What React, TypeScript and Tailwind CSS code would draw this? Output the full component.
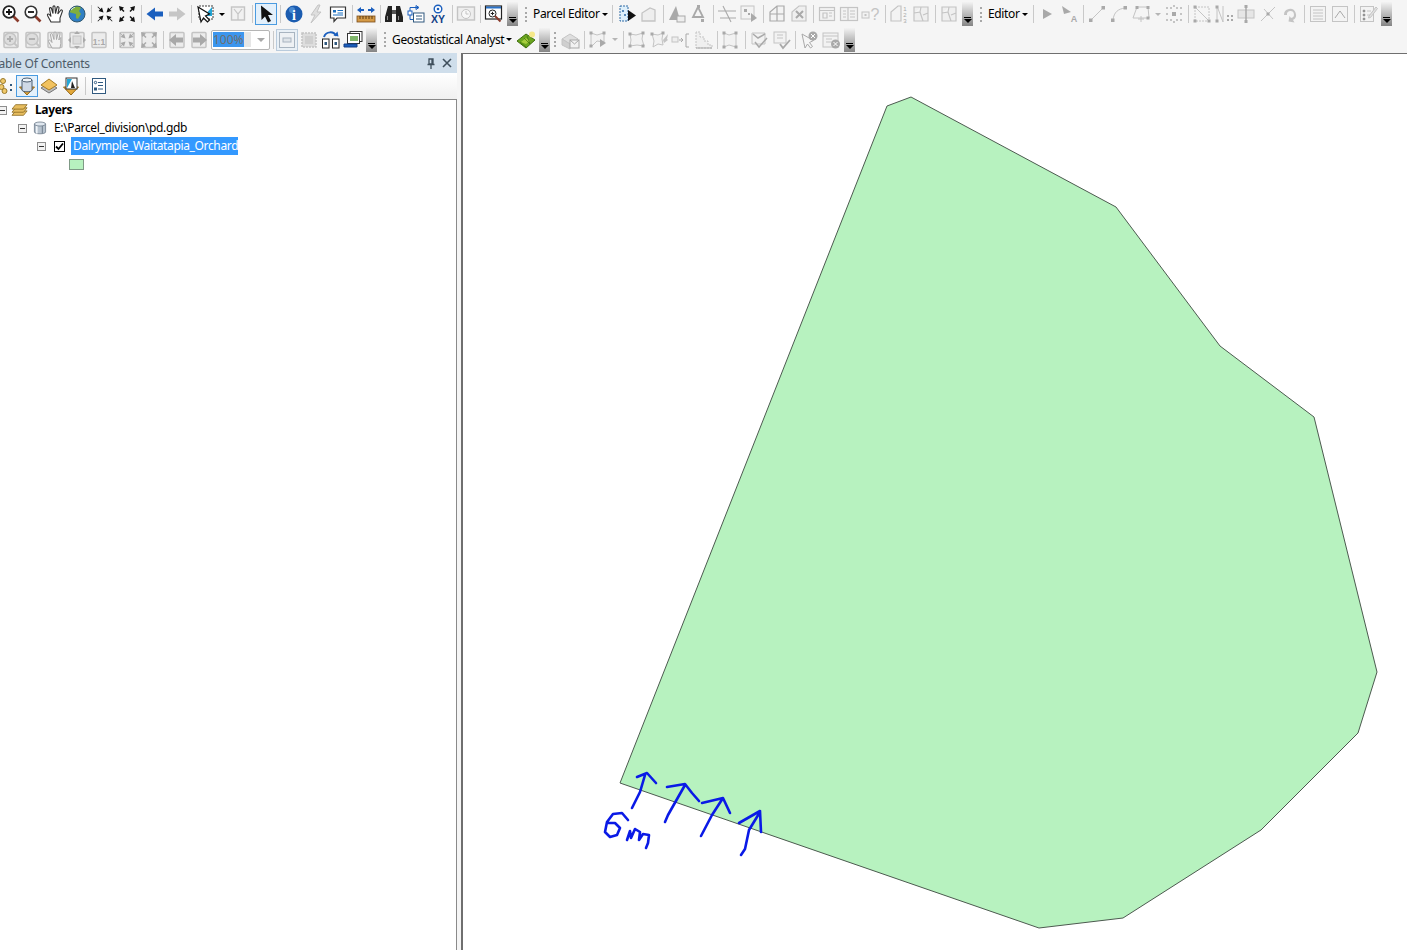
import type { ReactNode } from "react"

const G = "#c4c4c4"
const D = "#a9a9a9"

const page = <rect x="3" y="2.5" width="14" height="15" rx="1" fill="#ececec" stroke={G} strokeWidth="1.5" />
const parcel = <path d="M3 3h14v14H3z M3 9l6-1 1-5 M9 8l3 9 M12 11l5-2" fill="#efefef" stroke={G} strokeWidth="1.2" />
const win = <g fill="#f2f2f2" stroke={G} strokeWidth="1.2"><rect x="2.5" y="3.5" width="15" height="13" /><path d="M2.5 6.5h15 M6 9h4v5H6z M12 9h3 M12 12h3" /></g>

const arrowIn = <path d="M2 2l5 1.500-1.500 1.500 2 2-1 1-2-2L3 7z M18 2l-5 1.500 1.500 1.500-2 2 1 1 2-2L17 7z M2 18l5-1.500-1.500-1.500 2-2-1-1-2 2L3 13z M18 18l-5-1.500 1.500-1.500-2-2 1-1 2 2 1.500-1.500z" />
const arrowsIn = <path d="M8.500 8.500L3.500 7l1.500-1.500L2.500 3 3 2.500 5.500 5 7 3.500z M11.500 8.500L16.500 7 15 5.500 17.500 3 17 2.500 14.500 5 13 3.500z M8.500 11.500L3.500 13 5 14.500 2.500 17l.5.500L5.500 15 7 16.500z M11.500 11.500L16.500 13 15 14.500l2.500 2.500-.5.500L14.500 15 13 16.500z" />

const icons: Record<string, ReactNode> = {
  zoomIn: <><path d="M12 12l5.500 5.500" stroke="#8a3b2c" strokeWidth="2.600" /><circle cx="8" cy="8" r="5.800" fill="#fff" stroke="#222" strokeWidth="1.800" /><path d="M5 8h6M8 5v6" stroke="#111" strokeWidth="1.800" /></>,
  zoomOut: <><path d="M12 12l5.500 5.500" stroke="#8a3b2c" strokeWidth="2.600" /><circle cx="8" cy="8" r="5.800" fill="#fff" stroke="#333" strokeWidth="1.600" /><path d="M5 8h6" stroke="#111" strokeWidth="1.800" /></>,
  hand: <path d="M6 18L2.500 11.500c-.5-1.500 1-2 2-.8L6 12.500 4.500 5c-.3-1.500 1.500-2 2-.5L8 9.500 8 3c0-1.500 2-1.500 2 0l.5 6.500L12 3.500c.4-1.400 2.200-1 2 .5l-1.200 6 2.700-3.500c1-1.200 2.500-.2 1.800 1L15 14v4z" fill="#fff" stroke="#333" strokeWidth="1.100" />,
  globe: <><circle cx="10" cy="10" r="8" fill="#2f7fc4" /><path d="M6 3c3-1 7-1 8 1l-2 3 2 3-3 5-2-1 0-4-4-1-3-1z" fill="#7fae3c" /><path d="M4 6a7 7 0 0 1 4-3" stroke="#cfe6f7" strokeWidth="1.200" fill="none" /><circle cx="10" cy="10" r="8" fill="none" stroke="#31586f" /></>,
  fixedIn: <g fill="#111">{arrowsIn}</g>,
  fixedOut: <g fill="#111">{arrowIn}</g>,
  back: <path d="M1.500 10L10 3.500V7.500h8v5h-8v4z" fill="#1b5fbe" />,
  forward: <path d="M18.500 10L10 3.500V7.500H2v5h8v4z" fill="#c6c6c6" />,
  select: <><path d="M4 2h14v13H4z" fill="#fff" stroke="#3b3b3b" strokeDasharray="2 1" /><path d="M9 12L17 3v9z" fill="#22a7d8" /><path d="M3 3l3 15 2.500-4 4 4 2-2-4-4 4-2z" fill="#fff" stroke="#111" strokeWidth="1.200" /></>,
  clearSel: <><rect x="3.500" y="3" width="13" height="13" fill="#f1f1f1" stroke={G} strokeWidth="1.400" /><path d="M6 5l4 5 4-5M10 10v6" stroke={G} strokeWidth="1.200" fill="none" /></>,
  pointer: <path d="M5 1.500L5.500 16l3.500-3.500 3 6 3-1.500-3-6h5z" fill="#111" />,
  info: <><circle cx="10" cy="10" r="8.500" fill="#1b5cb0" /><circle cx="8" cy="6" r="3" fill="#5d9ee0" opacity=".7" /><text x="10" y="15.500" textAnchor="middle" fontSize="14" fontWeight="700" fontFamily="Liberation Serif, serif" fill="#fff">i</text></>,
  flash: <path d="M12 1L5 11h4l-4 8 10-11h-4l3-7z" fill="#dedede" stroke={G} />,
  popup: <><path d="M2.500 3h15v11H9l-3 3.500V14H2.500z" fill="#fff" stroke="#333" strokeWidth="1.200" /><rect x="5" y="6" width="3" height="2.500" fill="#1b6fbe" /><path d="M9.500 6.500h5.500M9.500 9h5.500M5 11h10" stroke="#1b6fbe" /></>,
  measure: <><path d="M1 6l4-3v2h3v2H5v2z M19 6l-4-3v2h-3v2h3v2z" fill="#1b5fbe" /><rect x="1" y="12" width="18" height="6" fill="#d49a46" stroke="#7a4d1a" strokeWidth=".800" /><path d="M4 12v3M7 12v3M10 12v3M13 12v3M16 12v3" stroke="#5b3a10" /></>,
  binoculars: <><path d="M4 2h4v16H1v-5z M12 2h4l3 11v5h-7z" fill="#222" /><rect x="8" y="6" width="4" height="4" fill="#555" /><path d="M3.500 12v4M14.500 12v4" stroke="#8a8a8a" /></>,
  route: <><rect x="2" y="7" width="4" height="4" fill="#fff" stroke="#1b5fbe" /><rect x="7.500" y="9" width="10.500" height="9" fill="#fff" stroke="#30597f" /><path d="M10 12h6M10 15h6" stroke="#30597f" /><path d="M4 7V3.500h8M10 1.500l3 2-3 2zM4 11v4.500h3" stroke="#1b5fbe" fill="none" /></>,
  xy: <><circle cx="10" cy="5" r="3.800" fill="#fff" stroke="#1b5fbe" strokeWidth="1.400" /><circle cx="10" cy="5" r="1.300" fill="#1b5fbe" /><text x="10" y="19" textAnchor="middle" fontSize="10.500" fontWeight="700" fontFamily="Liberation Sans, sans-serif" fill="#123f86">XY</text></>,
  time: <><rect x="1.500" y="3" width="17" height="13" fill="#eeeeee" stroke={G} strokeWidth="1.400" /><circle cx="10" cy="10" r="4.500" fill="#f8f8f8" stroke={G} /><path d="M10 7v3h2.500" stroke={G} fill="none" /></>,
  viewer: <><rect x="1.500" y="2" width="16" height="13" fill="#fff" stroke="#222" strokeWidth="1.200" /><rect x="2" y="2.500" width="15" height="2" fill="#2b73c8" /><circle cx="8.500" cy="9.500" r="3.500" fill="#fff" stroke="#222" /><path d="M6.800 9.500h3.400M8.500 7.800v3.400" stroke="#222" /><path d="M11 12l5.500 5.500" stroke="#8a3b2c" strokeWidth="2" /></>,
  peSelect: <><path d="M3 2h8v15H3z" fill="#dff0fb" stroke="#2e6aa5" strokeDasharray="2 1" /><circle cx="6" cy="7" r="1" fill="#2e6aa5" /><circle cx="8" cy="11" r="1" fill="#2e6aa5" /><path d="M11 6l8 5.500-8 5.500z" fill="#111" /></>,
  pePoly: <path d="M3 17V9l8-5 5 2v11z" fill="#eeeeee" stroke={G} strokeWidth="1.300" />,
  peTri: <><path d="M9 2L2 16h11z" fill={D} /><rect x="10" y="12" width="8" height="6" fill="#eee" stroke={D} /></>,
  peA: <><path d="M9 3L4 13h10z" fill="none" stroke={D} strokeWidth="1.800" /><rect x="8" y="1" width="3" height="3" fill={D} /><rect x="12" y="15" width="3" height="3" fill={D} /></>,
  peCross: <path d="M1 7h18M3 14h16M6 2l8 16M5 7h2M12 14h2" stroke={D} strokeWidth="1.100" fill="none" />,
  peBox: <><rect x="2" y="2" width="13" height="13" fill="#f3f3f3" stroke={G} /><rect x="5" y="5" width="3" height="3" fill={D} /><rect x="9" y="9" width="2" height="2" fill={D} /><path d="M12 9l6 5-6 4z" fill={D} /></>,
  peSplit: <path d="M3 17V8l7-6h7v15z M10 2v15 M3 10h14" fill="#f3f3f3" stroke={D} strokeWidth="1.200" />,
  peX: <><path d="M3 17V8l7-6h7v15z" fill="#efefef" stroke={G} strokeWidth="1.200" /><path d="M7 7l7 7M14 7l-7 7" stroke={D} strokeWidth="2" /></>,
  win,
  win2: <g fill="#f2f2f2" stroke={G} strokeWidth="1.200"><rect x="1.500" y="3.500" width="17" height="13" /><path d="M9 3.500v13 M4 7h3M4 10h3M4 13h3M11 7h5M11 10h5M11 13h5" /></g>,
  peQ: <><rect x="1" y="8" width="7" height="6" fill="#f2f2f2" stroke={G} /><rect x="3.500" y="10" width="2" height="2" fill={G} /><text x="14" y="16" textAnchor="middle" fontSize="16" fontFamily="Liberation Sans, sans-serif" fill={G}>?</text></>,
  peNum: <><path d="M2 17V8l7-6h3v15z" fill="#f3f3f3" stroke={G} strokeWidth="1.200" /><text x="16" y="7" textAnchor="middle" fontSize="6" fill={D} fontFamily="Liberation Sans, sans-serif">1</text><text x="16" y="13" textAnchor="middle" fontSize="6" fill={D} fontFamily="Liberation Sans, sans-serif">2</text><text x="16" y="19" textAnchor="middle" fontSize="6" fill={D} fontFamily="Liberation Sans, sans-serif">3</text></>,
  parcel,
  play: <path d="M6 5l9 5-9 5z" fill={D} />,
  playA: <><path d="M3 2l9 6-7 2z" fill={D} /><text x="15" y="18" textAnchor="middle" fontSize="9" fontWeight="700" fontFamily="Liberation Sans, sans-serif" fill={D}>A</text></>,
  line: <><path d="M4 16L16 4" stroke={G} /><rect x="2" y="14.500" width="3.500" height="3.500" fill={D} /><rect x="14.500" y="2" width="3.500" height="3.500" fill={D} /></>,
  curve: <><path d="M4 16C5 8 9 5 16 4" stroke={G} fill="none" /><rect x="2" y="14.500" width="3.500" height="3.500" fill={D} /><rect x="14.500" y="2" width="3.500" height="3.500" fill={D} /></>,
  poly: <><path d="M6 3h11l1 11H2z" fill="none" stroke={G} /><rect x="4.500" y="2" width="3" height="3" fill={D} /><rect x="15.500" y="2" width="3" height="3" fill={D} /><rect x="15.500" y="12.500" width="3" height="3" fill={D} /><path d="M10 12v6M7 15h6" stroke={G} /></>,
  dots: <g fill={G}><rect x="8" y="8" width="4" height="4" fill={D} /><path d="M2 3h2v2H2zM6 3h2v2H6zM12 3h2v2h-2zM16 3h2v2h-2zM2 9h2v2H2zM16 9h2v2h-2zM2 15h2v2H2zM6 15h2v2H6zM12 15h2v2h-2zM16 15h2v2h-2zM9 1h2v2H9zM9 17h2v2H9z" /></g>,
  rectDash: <><path d="M3 3h14v14H3z" fill="none" stroke={G} strokeDasharray="2 1" /><path d="M3 3l14 14" stroke={G} /><rect x="1.500" y="1.500" width="3" height="3" fill={D} /><rect x="15.500" y="15.500" width="3" height="3" fill={D} /><rect x="1.500" y="15.500" width="3" height="3" fill={D} /></>,
  trace: <><path d="M3 2v16M9 2v16M3 2l6 16" stroke={G} fill="none" /><rect x="1.500" y="1.500" width="3" height="3" fill={D} /><rect x="1.500" y="15.500" width="3" height="3" fill={D} /><path d="M13 11h2v2h-2zM17 11h2v2h-2zM13 15h2v2h-2zM17 15h2v2h-2z" fill={D} /></>,
  plusBox: <><rect x="2" y="6" width="16" height="8" fill="#e6e6e6" stroke={G} /><path d="M10 2v16" stroke={D} strokeWidth="1.500" /><rect x="8.500" y="1" width="3" height="3" fill={D} /><rect x="8.500" y="16" width="3" height="3" fill={D} /></>,
  xLine: <><path d="M3 17L17 3M6 5l9 10" stroke={G} /><rect x="8.500" y="8.500" width="3" height="3" fill={D} /></>,
  rotate: <path d="M4 11a6 6 0 1 1 9 5l1.500 2.500-6-1 1-5.500 1.500 2a3.500 3.500 0 1 0-4-3z" fill={G} />,
  table: <g fill="#f3f3f3" stroke={G}><rect x="2.500" y="2.500" width="15" height="15" /><path d="M5 6h10M5 9h10M5 12h10M5 15h10" /></g>,
  sketch: <g fill="#f3f3f3" stroke={G}><rect x="2.500" y="2.500" width="15" height="15" /><path d="M5 14l5-7 5 7" fill="none" stroke={D} /></g>,
  attr: <><rect x="2.500" y="2.500" width="13" height="15" fill="#f3f3f3" stroke={G} /><path d="M5 6h2v2H5zM5 10h2v2H5zM5 14h2v2H5zM9 7h4M9 11h4" stroke={G} /><path d="M11 12l7-9 1.500 1.500-7 9-2 .5z" fill="#e0e0e0" stroke={G} /></>,
  gZoomIn: <>{page}<circle cx="9" cy="9" r="6" fill="#ddd" stroke={G} strokeWidth="1.600" /><path d="M6 9h6M9 6v6" stroke="#b0b0b0" strokeWidth="2" /><path d="M13 13l4 4" stroke={G} strokeWidth="2" /></>,
  gZoomOut: <>{page}<circle cx="9" cy="9" r="6" fill="#ddd" stroke={G} strokeWidth="1.600" /><path d="M6 9h6" stroke="#b0b0b0" strokeWidth="2" /><path d="M13 13l4 4" stroke={G} strokeWidth="2" /></>,
  gHand: <>{page}<path d="M7 18L3.500 11.500c-.5-1.500 1-2 2-.8L7 12.500 5.500 5c-.3-1.500 1.500-2 2-.5L9 9.500 9 3c0-1.500 2-1.500 2 0l.5 6.500L13 3.500c.4-1.400 2.200-1 2 .5l-1.200 6 2-2.500 0 6L15 18z" fill="#f2f2f2" stroke={D} strokeWidth="1" /></>,
  gWhole: <>{page}<rect x="6" y="6" width="8" height="8" fill="#ddd" stroke={G} /><path d="M10 1l3 3H7zM10 19l3-3H7zM1 10l3-3v6zM19 10l-3-3v6z" fill={D} /></>,
  g11: <>{page}<text x="10" y="15" textAnchor="middle" fontSize="8.500" fontWeight="700" fontFamily="Liberation Sans, sans-serif" fill={D}>1:1</text></>,
  gFixedIn: <>{page}<g fill={D}>{arrowsIn}</g></>,
  gFixedOut: <>{page}<g fill={D}>{arrowIn}</g></>,
  gBack: <>{page}<path d="M2 10l7-6v3.500h7v5H9V16z" fill={D} /></>,
  gForward: <>{page}<path d="M18 10l-7-6v3.500H4v5h7V16z" fill={D} /></>,
  gPage: <><rect x="2.500" y="2.500" width="15" height="15" fill="#eef1f4" stroke="#a8b4c0" /><rect x="6" y="8" width="8" height="4" fill="#dfe4e9" stroke="#a8b4c0" /></>,
  gNoise: <><rect x="3" y="3" width="14" height="14" fill="#ddd" stroke={G} strokeDasharray="2 1" strokeWidth="1.500" /><rect x="6" y="6" width="8" height="8" fill="#cfcfcf" /></>,
  rotatePage: <><rect x="1.500" y="9" width="6.500" height="9" fill="#fff" stroke="#222" /><rect x="11.500" y="9" width="6.500" height="9" fill="#fff" stroke="#222" /><path d="M3 7C5 1 13 1 15 6" stroke="#1b5fbe" strokeWidth="2" fill="none" /><path d="M12.500 5.500l5 1-1-5z" fill="#1b5fbe" /><rect x="3.500" y="12" width="2.500" height="3" fill="#30597f" /><rect x="13.500" y="12" width="2.500" height="3" fill="#30597f" /></>,
  pages: <><rect x="7" y="1.500" width="12" height="10" fill="#fff" stroke="#333" /><rect x="4.500" y="3.500" width="12" height="10" fill="#fff" stroke="#333" /><rect x="7" y="6" width="8" height="5" fill="#7fb56a" /><path d="M1 14v3h13v-3z" fill="#1b5fbe" /><path d="M1 14h13v3H1z" fill="none" stroke="#123f86" /></>,
  geo: <><path d="M1 11l9-7 9 6-9 8z" fill="#6aa51e" stroke="#3f6e0e" /><path d="M5 12l5-4 4 3-4 3z" fill="#a7cd3e" /><path d="M4 12l6 5M8 8l6 6M11 6l3 8" stroke="#3f6e0e" strokeWidth=".700" /><circle cx="16" cy="4.500" r="3" fill="#f6e98a" /></>,
  gBuild: <><path d="M2 9l8-5 8 5-8 5z" fill="#dedede" stroke={G} /><path d="M2 9v6l8 4V14z" fill="#cfcfcf" stroke={G} /><rect x="10" y="10" width="9" height="8" fill="#f2f2f2" stroke={D} /><path d="M10 10l4.500 4 4.500-4" stroke={D} fill="none" /></>,
  gTopo: <><path d="M3 3l6 2 7-2v9l-7-1-6 6z" fill="#f2f2f2" stroke={G} /><rect x="1.500" y="1.500" width="3" height="3" fill={D} /><rect x="14.500" y="1.500" width="3" height="3" fill={D} /><rect x="1.500" y="14.500" width="3" height="3" fill={D} /><path d="M12 9l6 4-6 4z" fill={D} /></>,
  gTopo2: <><path d="M3 4l6 1 7-2-1 6 2 7-7-1-7 1 1-6z" fill="#f2f2f2" stroke={G} /><rect x="1.500" y="2.500" width="3" height="3" fill={D} /><rect x="14.500" y="1.500" width="3" height="3" fill={D} /><rect x="14.500" y="14.500" width="3" height="3" fill={D} /><rect x="1.500" y="14.500" width="3" height="3" fill={D} /></>,
  gTopo3: <><path d="M3 4l6 1 5-2-1 6 1 6-5-1-5 3 1-6z" fill="#f2f2f2" stroke={G} /><rect x="1.500" y="2.500" width="3" height="3" fill={D} /><rect x="12.500" y="1.500" width="3" height="3" fill={D} /><path d="M14 10l5-6-1 5 1 1-4 3z" fill={G} /></>,
  gShift: <><rect x="1" y="7" width="6" height="5" fill="#eee" stroke={G} /><path d="M8 10h4M10 8l2 2-2 2" stroke={D} fill="none" /><path d="M18 4h-3v13h3" stroke={D} fill="none" /></>,
  gSteps: <><path d="M3 2v16h16v-3h-4v-4h-4V7H7V2z" fill="#efefef" stroke={G} strokeDasharray="2 1" /><path d="M3 18h16" stroke={D} /></>,
  gEdit: <><path d="M3 3l5 2 7-2v14l-7-2-5 2z" fill="#f2f2f2" stroke={G} /><rect x="1.500" y="1.500" width="3" height="3" fill={D} /><rect x="13.500" y="1.500" width="3" height="3" fill={D} /><rect x="1.500" y="15.500" width="3" height="3" fill={D} /><rect x="13.500" y="15.500" width="3" height="3" fill={D} /></>,
  gCheck: <><path d="M3 3h13v11H3z" fill="#f2f2f2" stroke={G} /><path d="M4 4l5 4 7-4M6 12l4 5 8-9" stroke={D} strokeWidth="1.500" fill="none" /></>,
  gCheck2: <><rect x="3" y="2" width="12" height="11" fill="#f2f2f2" stroke={G} /><path d="M6 5h6M6 8h6" stroke={G} /><path d="M9 14l3 4 7-8" stroke={D} strokeWidth="1.800" fill="none" /></>,
  gCursorX: <><path d="M3 4l3 14 2.500-4 3 4 2-1.500-3-4 4-2z" fill="#f5f5f5" stroke={D} /><circle cx="14" cy="6" r="4.500" fill={D} /><path d="M12 4l4 4M16 4l-4 4" stroke="#fff" /></>,
  gTableX: <><rect x="2" y="3" width="15" height="14" fill="#f2f2f2" stroke={G} /><path d="M2 6h15M5 9h6M5 12h6" stroke={G} /><circle cx="14.500" cy="14" r="4.500" fill={D} /><path d="M12.500 12l4 4M16.500 12l-4 4" stroke="#fff" /></>,
  tocDraw: <><circle cx="8" cy="5" r="2.500" fill="#f0c869" stroke="#9a7a2b" /><circle cx="6.500" cy="11" r="2.500" fill="#f0c869" stroke="#9a7a2b" /><circle cx="9.500" cy="15" r="2.500" fill="#f0c869" stroke="#9a7a2b" /><path d="M15 8h2v2h-2zM15 13h2v2h-2z" fill="#30597f" /></>,
  tocDb: <><path d="M2.500 11h15L10 19z" fill="#e3a83a" stroke="#96691a" /><path d="M5 4v10c0 2.400 10 2.400 10 0V4z" fill="#cfd9e6" stroke="#4b5d70" /><ellipse cx="10" cy="4" rx="5" ry="2" fill="#eef3f8" stroke="#4b5d70" /></>,
  tocVis: <><path d="M2 12l8-5 8 5-8 5z" fill="#bdbdbd" stroke="#777" /><path d="M2 9l8-6 8 6-8 5z" fill="#f2c25e" stroke="#a67b25" /></>,
  tocSel: <><path d="M2.500 11h15L10 19z" fill="#e3a83a" stroke="#96691a" /><rect x="5" y="2" width="11" height="11" fill="#fff" stroke="#333" /><path d="M6 3v9l5-9z" fill="#22a7d8" /><path d="M11 5l3 7h-4z" fill="#222" /></>,
  tocOpt: <g stroke="#30597f" fill="#fff"><rect x="3.500" y="2.500" width="13" height="15" /><circle cx="6.500" cy="6.500" r="1.200" /><rect x="5.500" y="12" width="2" height="2" fill="#30597f" /><path d="M9 6.500h5M9 9.500h5M9 13h5" /></g>,
  layers: <g stroke="#8a6a1e" fill="#e7bd5f" strokeWidth=".900"><path d="M1 15l4-5h13l-4 5z" /><path d="M1 11.500l4-5h13l-4 5z" /><path d="M1 8l4-5h13l-4 5z" /></g>,
  db: <><path d="M3 5v10c0 3 14 3 14 0V5z" fill="#b6c2ce" stroke="#6d7b8a" /><path d="M6 6v11" stroke="#f1f5f9" strokeWidth="2" /><path d="M13 6v11" stroke="#7c8a98" strokeWidth="1.500" /><ellipse cx="10" cy="5" rx="7" ry="2.500" fill="#dfe7ef" stroke="#6d7b8a" /></>,
}

function Ic({ n, className = "" }: { n: string; className?: string }) {
  return (
    <div className={`flex h-[22px] w-[22px] shrink-0 items-center justify-center ${className}`}>
      <svg width="20" height="20" viewBox="0 0 20 20">{icons[n]}</svg>
    </div>
  )
}

function Sep() {
  return (
    <div className="flex w-[6px] shrink-0 justify-center">
      <div className="h-[18px] w-px bg-[#c9c9c9]" />
    </div>
  )
}

function Caret({ dim }: { dim?: boolean }) {
  return (
    <div className="flex w-[11px] shrink-0 justify-center">
      <div className={`h-0 w-0 border-x-[3px] border-t-[3px] border-x-transparent ${dim ? "border-t-[#b5b5b5]" : "border-t-black"}`} />
    </div>
  )
}

function Grip({ w }: { w: string }) {
  return (
    <div className={`flex shrink-0 justify-center ${w}`}>
      <div className="h-[15px] border-l-2 border-dotted border-[#a8a8a8]" />
    </div>
  )
}

function Handle() {
  return (
    <div className="ml-[2px] flex h-[24px] w-[11px] shrink-0 flex-col items-center justify-end gap-[1px] bg-gradient-to-b from-[#f3f3f3] to-[#858585] pb-[3px]">
      <div className="h-px w-[7px] bg-black" />
      <div className="h-0 w-0 border-x-[4px] border-t-[4px] border-x-transparent border-t-black" />
    </div>
  )
}

function Label({ text, w }: { text: string; w: string }) {
  return (
    <div className={`flex shrink-0 items-center whitespace-nowrap pl-[4px] text-[12px] tracking-[-0.35px] text-black ${w}`}>
      {text}
      <div className="ml-[2px] h-0 w-0 border-x-[3px] border-t-[3px] border-x-transparent border-t-black" />
    </div>
  )
}

function Row({ children, className = "" }: { children: ReactNode; className?: string }) {
  return <div className={`flex items-center ${className}`}>{children}</div>
}

function Toolbars() {
  return (
    <div className="h-[53px] shrink-0 bg-[#f5f5f5]">
      <Row className="h-[26px] pt-[2px]">
        <Ic n="zoomIn" /><Ic n="zoomOut" /><Ic n="hand" /><Ic n="globe" /><Sep />
        <Ic n="fixedIn" /><Ic n="fixedOut" /><Sep />
        <Ic n="back" /><Ic n="forward" /><Sep />
        <Ic n="select" /><Caret /><Ic n="clearSel" /><Sep />
        <Ic n="pointer" className="border border-[#4a9be0] bg-[#e3f0fb]" /><Sep />
        <Ic n="info" /><Ic n="flash" /><Ic n="popup" /><Sep />
        <Ic n="measure" /><Sep />
        <Ic n="binoculars" /><Ic n="route" /><Ic n="xy" /><Sep />
        <Ic n="time" /><Sep />
        <Ic n="viewer" /><Handle />
        <div className="w-[4px] shrink-0" />
        <Grip w="w-[7px]" />
        <Label text="Parcel Editor" w="w-[80px]" /><Sep />
        <div className="w-px shrink-0" />
        <Ic n="peSelect" /><Ic n="pePoly" /><Sep />
        <Ic n="peTri" /><Ic n="peA" /><Sep />
        <Ic n="peCross" /><Ic n="peBox" /><Sep />
        <Ic n="peSplit" /><Ic n="peX" /><Sep />
        <Ic n="win" /><Ic n="win2" /><Ic n="peQ" /><Sep />
        <Ic n="peNum" /><Ic n="parcel" /><Sep />
        <Ic n="parcel" /><Handle />
        <div className="w-[4px] shrink-0" />
        <Grip w="w-[7px]" />
        <Label text="Editor" w="w-[46px]" /><Sep />
        <Ic n="play" /><Ic n="playA" /><Sep />
        <Ic n="line" /><Ic n="curve" /><Ic n="poly" /><Caret dim /><Ic n="dots" /><Sep />
        <Ic n="rectDash" /><Ic n="trace" /><Ic n="plusBox" /><Ic n="xLine" /><Ic n="rotate" /><Sep />
        <Ic n="table" /><Ic n="sketch" /><Sep />
        <Ic n="attr" /><Handle />
      </Row>
      <Row className="h-[27px]">
        <Ic n="gZoomIn" /><Ic n="gZoomOut" /><Ic n="gHand" /><Ic n="gWhole" /><Ic n="g11" /><Sep />
        <Ic n="gFixedIn" /><Ic n="gFixedOut" /><Sep />
        <Ic n="gBack" /><Ic n="gForward" />
        <div className="ml-px flex h-[20px] w-[59px] shrink-0 items-center rounded-[2px] border border-[#b5b5b5] bg-white pl-[1px]">
          <div className="flex h-[15px] w-[38px] items-center bg-[#e6e6e6]">
            <span className="bg-[#3c96ee] text-[12px] leading-[15px] text-[#6f6f6f]">100%</span>
          </div>
          <div className="ml-[6px] h-0 w-0 border-x-[4px] border-t-[4px] border-x-transparent border-t-[#a8a8a8]" />
        </div>
        <Sep />
        <Ic n="gPage" className="border border-[#b9cbdc] bg-[#e9f0f6]" /><Ic n="gNoise" /><Ic n="rotatePage" /><Ic n="pages" /><Handle />
        <div className="w-[4px] shrink-0" />
        <Grip w="w-[7px]" />
        <Label text="Geostatistical Analyst" w="w-[127px]" />
        <Ic n="geo" /><Handle />
        <Grip w="w-[9px]" />
        <Ic n="gBuild" /><Sep />
        <Ic n="gTopo" /><Caret dim /><Sep />
        <Ic n="gTopo2" /><Ic n="gTopo3" /><Ic n="gShift" /><Ic n="gSteps" /><Sep />
        <Ic n="gEdit" /><Sep />
        <Ic n="gCheck" /><Ic n="gCheck2" /><Sep />
        <Ic n="gCursorX" /><Ic n="gTableX" /><Handle />
      </Row>
    </div>
  )
}

function Expander({ className = "" }: { className?: string }) {
  return (
    <div className={`flex h-[9px] w-[9px] shrink-0 items-center justify-center border border-[#8e8e8e] bg-[#f2f2f2] ${className}`}>
      <div className="h-px w-[5px] bg-[#333]" />
    </div>
  )
}

function TocPanel() {
  return (
    <div className="flex w-[457px] shrink-0 flex-col overflow-hidden">
      <div className="flex h-[20px] shrink-0 items-center justify-between bg-[#cfdeeb] pr-[5px]">
        <span className="-ml-[7px] whitespace-nowrap pt-[2px] text-[12px] tracking-[-0.2px] text-[#4d5b68]">Table Of Contents</span>
        <div className="flex items-center gap-[6px] text-[#3f4f5c]">
          <svg width="10" height="11" viewBox="0 0 10 11" fill="none" stroke="currentColor" strokeWidth="1.300">
            <path d="M3 1h4v5H3zM1.500 6.500h7M5 6.500V11M6 1v5" />
          </svg>
          <svg width="10" height="10" viewBox="0 0 10 10" stroke="currentColor" strokeWidth="1.600">
            <path d="M1 1l8 8M9 1L1 9" />
          </svg>
        </div>
      </div>
      <div className="flex h-[26px] shrink-0 items-center bg-gradient-to-b from-white to-[#f0f0f0]">
        <Ic n="tocDraw" className="-ml-[6px]" />
        <Ic n="tocDb" className="border border-[#4a9be0] bg-[#e3f0fb]" />
        <Ic n="tocVis" />
        <Ic n="tocSel" />
        <Sep />
        <Ic n="tocOpt" />
      </div>
      <div className="flex-1 overflow-hidden border-t border-r border-[#8a8a8a] bg-white pt-[1px] text-[12px] tracking-[-0.35px] text-black">
        <div className="flex h-[18px] items-center">
          <Expander className="-ml-[2px]" />
          <div className="ml-[4px] flex w-[18px] justify-center"><svg width="18" height="16" viewBox="0 0 20 18">{icons.layers}</svg></div>
          <span className="ml-[6px] font-bold">Layers</span>
        </div>
        <div className="flex h-[18px] items-center pl-[18px]">
          <Expander />
          <div className="ml-[4px] flex w-[18px] justify-center"><svg width="18" height="16" viewBox="0 0 20 20">{icons.db}</svg></div>
          <span className="ml-[5px]">E:\Parcel_division\pd.gdb</span>
        </div>
        <div className="flex h-[18px] items-center pl-[37px]">
          <Expander />
          <div className="ml-[8px] flex h-[11px] w-[11px] shrink-0 items-center justify-center border border-black bg-white">
            <svg width="9" height="9" viewBox="0 0 9 9" fill="none" stroke="#000" strokeWidth="1.800"><path d="M1 4.500l2.500 2.500L8 1.500" /></svg>
          </div>
          <span className="ml-[6px] flex h-[18px] w-[167px] items-center whitespace-nowrap bg-[#3399ff] pl-[2px] text-white">Dalrymple_Waitatapia_Orchard</span>
        </div>
        <div className="flex h-[18px] items-center pl-[69px]">
          <div className="h-[11px] w-[15px] border border-[#7f9a86] bg-[#b7f2bf]" />
        </div>
      </div>
    </div>
  )
}

function MapView() {
  return (
    <div className="ml-[4px] min-w-0 flex-1 border-t border-l-2 border-[#6f6f6f] bg-white">
      <svg className="block h-full w-full" viewBox="463 54 944 896" fill="none">
        <polygon
          points="887,106 911,97 1116,207 1220,346 1314,417 1377,672 1358,733 1261,830 1123,918 1039,928 620,783"
          fill="#b7f2bf"
          stroke="#4c5a4f"
          strokeWidth="1"
        />
        <g stroke="#0a1ae6" strokeWidth="2.600" strokeLinecap="round" strokeLinejoin="round">
          <path d="M632 808L640 792L645 775M637 777L647 773L656 783" />
          <path d="M665 822L668 815L685 785M667 787L685 784L692 793L699 801" />
          <path d="M701 836L712 815L723 798M702 803L723 798L730 813" />
          <path d="M741 855L745 849L749 830L760 812M739 823L760 811L761 832" />
          <path d="M628 820L622 813L613 814L607 822L605 832L610 837L617 835L620 828L615 823L607 823" />
          <path d="M627 840L630 831L631 838L635 829L640 832L639 840M639 840L643 834L649 835L648 843L646 848" />
        </g>
      </svg>
    </div>
  )
}

export default function App() {
  return (
    <div
      className="flex h-[950px] w-[1407px] flex-col overflow-hidden bg-[#f5f5f5]"
      style={{ fontFamily: '"Noto Sans", "Open Sans", sans-serif' }}
    >
      <Toolbars />
      <div className="flex min-h-0 flex-1">
        <TocPanel />
        <MapView />
      </div>
    </div>
  )
}
